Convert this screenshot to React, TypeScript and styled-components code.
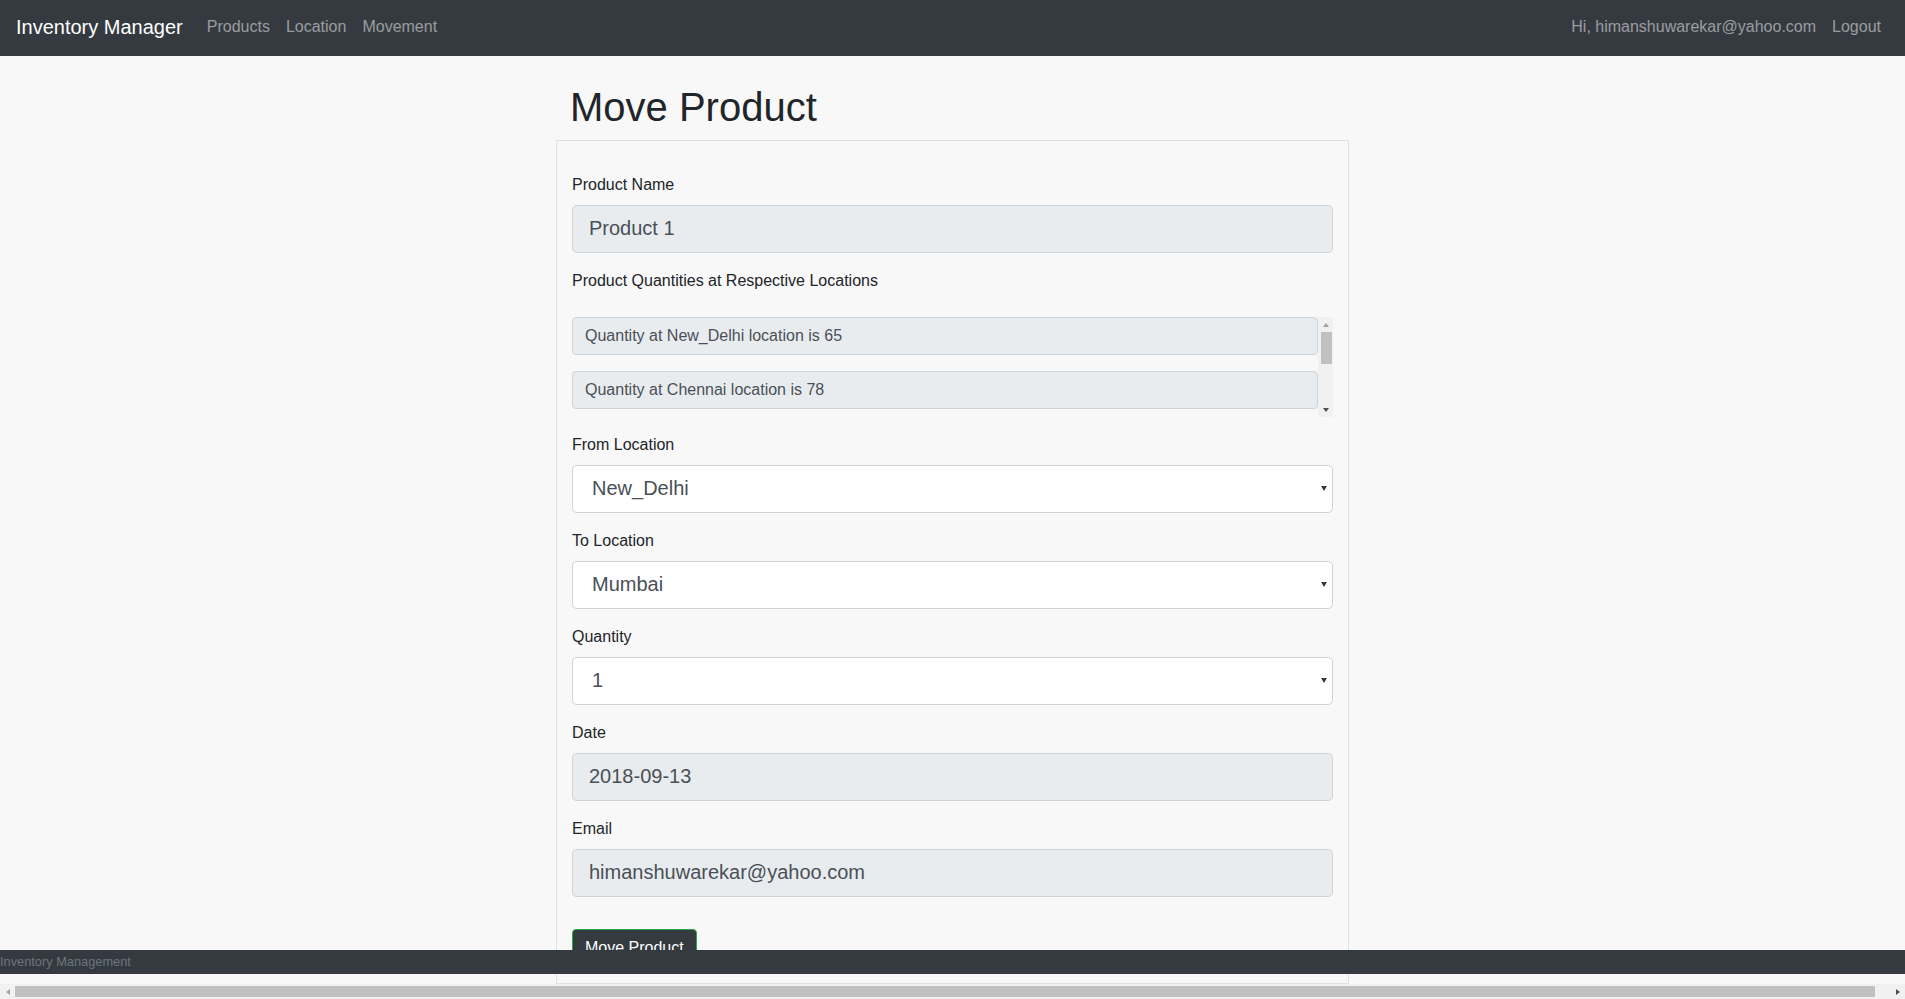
import React from "react";
import styled, { createGlobalStyle } from "styled-components";

const GlobalStyle = createGlobalStyle`
  * { box-sizing: border-box; }
  html { overflow: hidden; }
  body {
    margin: 0;
    background: #f8f8f8;
    color: #212529;
    font-family: "Liberation Sans", Arial, sans-serif;
    font-size: 16px;
    line-height: 1.5;
  }
`;

const Navbar = styled.nav`
  display: flex;
  align-items: center;
  height: 56px;
  padding: 0 16px 2px;
  background: #343a40;
`;

const Brand = styled.a`
  margin-right: 16px;
  color: #fff;
  font-size: 20px;
  line-height: 30px;
  text-decoration: none;
`;

const NavGroup = styled.div<{ $right?: boolean }>`
  display: flex;
  margin-left: ${(p) => (p.$right ? "auto" : "0")};
`;

const NavLink = styled.a`
  padding: 8px;
  color: rgba(255, 255, 255, 0.5);
  font-size: 16px;
  line-height: 24px;
  text-decoration: none;
`;

const Column = styled.main`
  width: 793px;
  margin: 0 auto;
`;

const Title = styled.h1`
  margin: 27px 0 9px 14px;
  font-size: 40px;
  font-weight: 500;
  line-height: 1.2;
  color: #212529;
`;

const Card = styled.form`
  display: flex;
  flex-direction: column;
  padding: 32px 15px 16px;
  border: 1px solid #dee2e6;
`;

const Field = styled.div`
  display: flex;
  flex-direction: column;
  margin-bottom: 16px;
`;

const Label = styled.label`
  display: block;
  margin-bottom: 8px;
  line-height: 24px;
  color: #212529;
`;

const LargeInput = styled.input`
  display: block;
  width: 100%;
  height: 48px;
  padding: 7px 16px 9px;
  font-family: inherit;
  font-size: 20px;
  line-height: 1.5;
  color: #495057;
  background: #e9ecef;
  border: 1px solid #ced4da;
  border-radius: 4.8px;
  outline: none;
`;

const QuantityBox = styled.div`
  display: flex;
  height: 100px;
  margin-top: 16px;
`;

const QuantityList = styled.div`
  flex: 1;
  min-width: 0;
  overflow: hidden;
`;

const QuantityItem = styled.input`
  display: block;
  width: 100%;
  height: 38px;
  margin-bottom: 16px;
  padding: 6px 12px;
  font-family: inherit;
  font-size: 16px;
  line-height: 1.5;
  color: #495057;
  background: #e9ecef;
  border: 1px solid #ced4da;
  border-radius: 4px;
  outline: none;
`;

/* drawn classic scrollbars */
const VTrack = styled.div`
  display: flex;
  flex-direction: column;
  width: 15px;
  background: #f1f1f1;
`;

const HTrack = styled.div`
  position: fixed;
  left: 0;
  right: 0;
  bottom: 0;
  display: flex;
  height: 15px;
  background: #f1f1f1;
`;

const ArrowButton = styled.div`
  display: flex;
  align-items: center;
  justify-content: center;
  flex: 0 0 15px;
  width: 15px;
  height: 15px;
`;

const Triangle = styled.span<{ $dir: "up" | "down" | "left" | "right"; $dim?: boolean }>`
  width: 0;
  height: 0;
  ${(p) => {
    const c = p.$dim ? "#a3a3a3" : "#505050";
    switch (p.$dir) {
      case "up":
        return `border-left: 3.5px solid transparent; border-right: 3.5px solid transparent; border-bottom: 4px solid ${c};`;
      case "down":
        return `border-left: 3.5px solid transparent; border-right: 3.5px solid transparent; border-top: 4px solid ${c};`;
      case "left":
        return `border-top: 3.5px solid transparent; border-bottom: 3.5px solid transparent; border-right: 4px solid ${c};`;
      default:
        return `border-top: 3.5px solid transparent; border-bottom: 3.5px solid transparent; border-left: 4px solid ${c};`;
    }
  }}
`;

const VThumb = styled.div`
  height: 32px;
  margin: 0 1px 0 3px;
  background: #c1c1c1;
`;

const HSpace = styled.div`
  flex: 1;
  display: flex;
  align-items: center;
  padding-right: 15px;
`;

const HThumb = styled.div`
  flex: 1;
  height: 11px;
  background: #c1c1c1;
`;

const Filler = styled.div`
  flex: 1;
`;

const SelectWrap = styled.div`
  position: relative;
`;

const Select = styled.select`
  display: block;
  width: 100%;
  height: 48px;
  padding: 7px 24px 9px 19px;
  appearance: none;
  -webkit-appearance: none;
  font-family: inherit;
  font-size: 20px;
  line-height: 1.5;
  color: #495057;
  background: #fff;
  border: 1px solid #ced4da;
  border-radius: 4.8px;
  outline: none;
`;

const Caret = styled.span`
  position: absolute;
  top: 21px;
  right: 6px;
  width: 0;
  height: 0;
  border-left: 3.5px solid transparent;
  border-right: 3.5px solid transparent;
  border-top: 5px solid #3a3a3a;
  pointer-events: none;
`;

const SubmitButton = styled.button`
  align-self: flex-start;
  margin-top: 16px;
  height: 38px;
  padding: 6px 12px;
  font-family: inherit;
  font-size: 16px;
  line-height: 24px;
  color: #fff;
  background: #343a40;
  border: 1px solid #28a745;
  border-radius: 4px;
`;

const Footer = styled.footer`
  position: fixed;
  left: 0;
  right: 0;
  bottom: 25px;
  display: flex;
  align-items: center;
  height: 24px;
  background: #343a40;
  color: #6c757d;
  font-size: 12.8px;
`;

const quantities = [
  { loc: "New_Delhi", qty: 65 },
  { loc: "Chennai", qty: 78 },
  { loc: "Mumbai", qty: 40 },
  { loc: "Kolkata", qty: 22 },
];

function SelectField({ label, value, options }: { label: string; value: string; options: string[] }) {
  return (
    <Field>
      <Label>{label}</Label>
      <SelectWrap>
        <Select defaultValue={value}>
          {options.map((o) => (
            <option key={o} value={o}>
              {o}
            </option>
          ))}
        </Select>
        <Caret />
      </SelectWrap>
    </Field>
  );
}

export default function App() {
  return (
    <>
      <GlobalStyle />
      <Navbar>
        <Brand href="#">Inventory Manager</Brand>
        <NavGroup>
          <NavLink href="#">Products</NavLink>
          <NavLink href="#">Location</NavLink>
          <NavLink href="#">Movement</NavLink>
        </NavGroup>
        <NavGroup $right>
          <NavLink href="#">Hi, himanshuwarekar@yahoo.com</NavLink>
          <NavLink href="#">Logout</NavLink>
        </NavGroup>
      </Navbar>
      <Column>
        <Title>Move Product</Title>
        <Card onSubmit={(e) => e.preventDefault()}>
          <Field>
            <Label>Product Name</Label>
            <LargeInput readOnly value="Product 1" />
          </Field>
          <Field>
            <Label>Product Quantities at Respective Locations</Label>
            <QuantityBox>
              <QuantityList>
                {quantities.map((q) => (
                  <QuantityItem
                    key={q.loc}
                    readOnly
                    value={`Quantity at ${q.loc} location is ${q.qty}`}
                  />
                ))}
              </QuantityList>
              <VTrack>
                <ArrowButton>
                  <Triangle $dir="up" $dim />
                </ArrowButton>
                <VThumb />
                <Filler />
                <ArrowButton>
                  <Triangle $dir="down" />
                </ArrowButton>
              </VTrack>
            </QuantityBox>
          </Field>
          <SelectField label="From Location" value="New_Delhi" options={["New_Delhi", "Chennai", "Mumbai", "Kolkata"]} />
          <SelectField label="To Location" value="Mumbai" options={["Mumbai", "New_Delhi", "Chennai", "Kolkata"]} />
          <SelectField label="Quantity" value="1" options={["1", "2", "3", "4", "5"]} />
          <Field>
            <Label>Date</Label>
            <LargeInput readOnly value="2018-09-13" />
          </Field>
          <Field>
            <Label>Email</Label>
            <LargeInput readOnly value="himanshuwarekar@yahoo.com" />
          </Field>
          <SubmitButton type="submit">Move Product</SubmitButton>
        </Card>
      </Column>
      <Footer>Inventory Management</Footer>
      <HTrack>
        <ArrowButton>
          <Triangle $dir="left" $dim />
        </ArrowButton>
        <HSpace>
          <HThumb />
        </HSpace>
        <ArrowButton>
          <Triangle $dir="right" />
        </ArrowButton>
      </HTrack>
    </>
  );
}
